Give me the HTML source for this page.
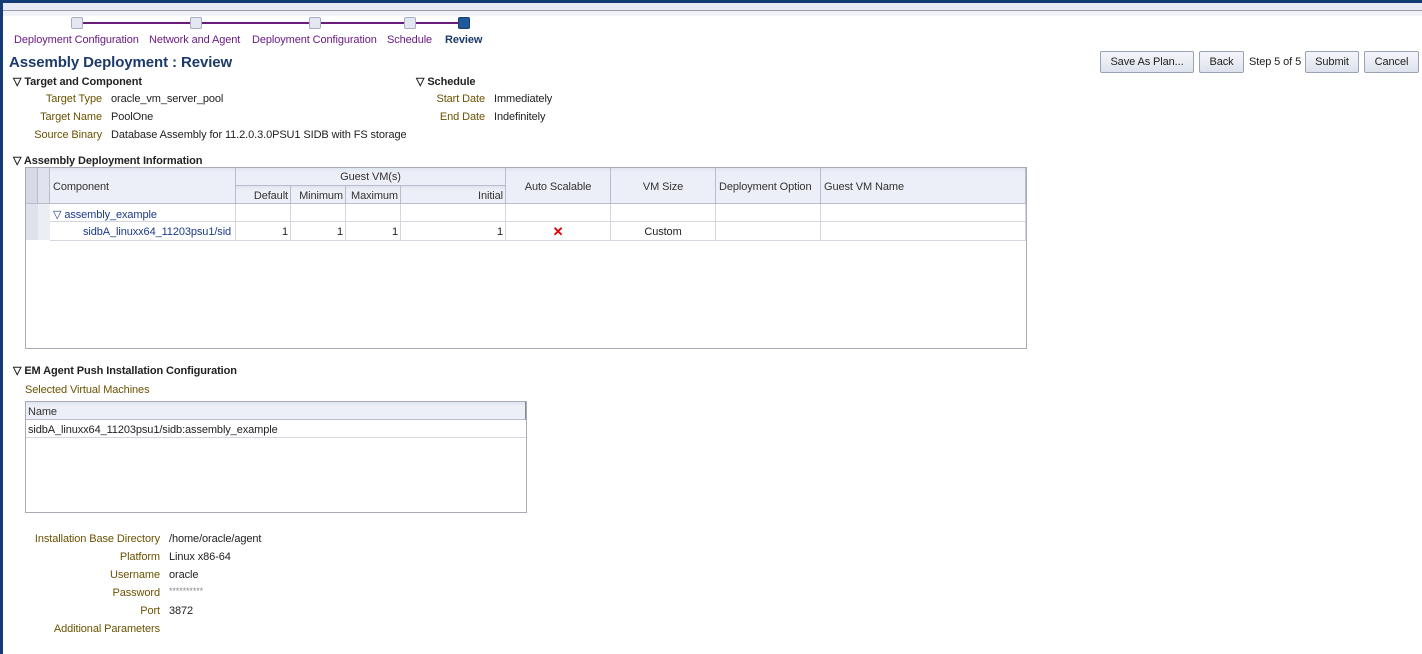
<!DOCTYPE html>
<html><head><meta charset="utf-8"><style>
*{margin:0;padding:0;box-sizing:border-box}
body{width:1422px;height:654px;background:#fff;position:relative;overflow:hidden;font-family:"Liberation Sans",sans-serif;font-size:11px;color:#222;letter-spacing:-0.1px}
.a{position:absolute;white-space:nowrap;margin-top:1px}
.f{margin-top:0}
.lbl{color:#6b5200;text-align:right}
.sq{position:absolute;top:17px;width:12px;height:12px;border:1px solid #a8aec4;background:#e4e7f0;border-radius:2px}
.st{color:#6b1c86;font-size:11px}
.h{font-weight:bold;font-size:11px;color:#222}
.btn{position:absolute;top:51px;height:22px;border:1px solid #9aa2b6;background:linear-gradient(#f4f6fa,#dde2ec);font-size:11px;color:#222;text-align:center;line-height:21px;border-radius:2px}
.c{position:absolute;border-right:1px solid #b8bccc;border-bottom:1px solid #b8bccc;padding-top:1px}
.hd{background:linear-gradient(#dfe4f0 0,#eceff7 4px,#eceff7);color:#333}
.r{border-right:1px solid #d4d7e0;border-bottom:1px solid #d4d7e0;position:absolute}
</style></head><body>
<div class="a f" style="left:0;top:0;width:1422px;height:3px;background:#143c74"></div>
<div class="a f" style="left:0;top:0;width:3px;height:654px;background:#143c74"></div>
<div class="a f" style="left:3px;top:3px;width:1419px;height:7px;background:#e8ebf4"></div>
<div class="a f" style="left:3px;top:10px;width:1419px;height:1px;background:#9a9ca6"></div>
<div class="a f" style="left:3px;top:11px;width:1419px;height:5px;background:#f1f3f9"></div>

<div class="a f" style="left:83px;top:22px;width:375px;height:2px;background:#6b1c7a"></div>
<div class="sq" style="left:71px"></div>
<div class="sq" style="left:190px"></div>
<div class="sq" style="left:309px"></div>
<div class="sq" style="left:404px"></div>
<div class="sq" style="left:458px;background:#1e5a9a;border-color:#154070"></div>
<div class="a st" style="left:14px;top:33px">Deployment Configuration</div>
<div class="a st" style="left:149px;top:33px">Network and Agent</div>
<div class="a st" style="left:252px;top:33px">Deployment Configuration</div>
<div class="a st" style="left:387px;top:33px">Schedule</div>
<div class="a" style="left:445px;top:33px;font-weight:bold;color:#1c3a6a">Review</div>

<div class="a" style="left:9px;top:53px;font-size:15px;font-weight:bold;color:#1c3a6a">Assembly Deployment : Review</div>
<div class="btn" style="left:1100px;width:94px">Save As Plan...</div>
<div class="btn" style="left:1199px;width:45px">Back</div>
<div class="a" style="left:1249px;top:55px">Step 5 of 5</div>
<div class="btn" style="left:1305px;width:54px">Submit</div>
<div class="btn" style="left:1364px;width:55px">Cancel</div>

<div class="a h" style="left:13px;top:74px">▽ Target and Component</div>
<div class="a lbl" style="left:20px;top:92px;width:82px">Target Type</div><div class="a" style="left:111px;top:92px">oracle_vm_server_pool</div>
<div class="a lbl" style="left:20px;top:110px;width:82px">Target Name</div><div class="a" style="left:111px;top:110px">PoolOne</div>
<div class="a lbl" style="left:20px;top:128px;width:82px">Source Binary</div><div class="a" style="left:111px;top:128px">Database Assembly for 11.2.0.3.0PSU1 SIDB with FS storage</div>
<div class="a h" style="left:416px;top:74px">▽ Schedule</div>
<div class="a lbl" style="left:420px;top:92px;width:65px">Start Date</div><div class="a" style="left:494px;top:92px">Immediately</div>
<div class="a lbl" style="left:420px;top:110px;width:65px">End Date</div><div class="a" style="left:494px;top:110px">Indefinitely</div>

<div class="a h" style="left:13px;top:153px">▽ Assembly Deployment Information</div>
<div class="a f" style="left:25px;top:167px;width:1002px;height:182px;border:1px solid #a8abb6"></div>
<div class="c hd" style="left:26px;top:168px;width:12px;height:36px;background:#d6dae6"></div>
<div class="c hd" style="left:38px;top:168px;width:12px;height:36px;background:#e0e3ee"></div>
<div class="c hd" style="left:50px;top:168px;width:186px;height:36px;padding:13px 0 0 3px">Component</div>
<div class="c hd" style="left:236px;top:168px;width:270px;height:18px;text-align:center;padding-top:3px">Guest VM(s)</div>
<div class="c hd" style="left:236px;top:186px;width:55px;height:18px;text-align:right;padding:4px 2px 0 0">Default</div>
<div class="c hd" style="left:291px;top:186px;width:55px;height:18px;text-align:right;padding:4px 2px 0 0">Minimum</div>
<div class="c hd" style="left:346px;top:186px;width:55px;height:18px;text-align:right;padding:4px 2px 0 0">Maximum</div>
<div class="c hd" style="left:401px;top:186px;width:105px;height:18px;text-align:right;padding:4px 2px 0 0">Initial</div>
<div class="c hd" style="left:506px;top:168px;width:105px;height:36px;text-align:center;padding-top:13px">Auto Scalable</div>
<div class="c hd" style="left:611px;top:168px;width:105px;height:36px;text-align:center;padding-top:13px">VM Size</div>
<div class="c hd" style="left:716px;top:168px;width:105px;height:36px;padding:13px 0 0 3px">Deployment Option</div>
<div class="c hd" style="left:821px;top:168px;width:205px;height:36px;padding:13px 0 0 3px">Guest VM Name</div>

<div class="a f" style="left:26px;top:204px;width:12px;height:36px;background:#dfe2ec"></div>
<div class="a f" style="left:38px;top:204px;width:12px;height:36px;background:#eceef5"></div>
<div class="r" style="left:50px;top:204px;width:186px;height:18px;padding:4px 0 0 3px;color:#1c3a8a">▽ assembly_example</div>
<div class="r" style="left:236px;top:204px;width:55px;height:18px"></div>
<div class="r" style="left:291px;top:204px;width:55px;height:18px"></div>
<div class="r" style="left:346px;top:204px;width:55px;height:18px"></div>
<div class="r" style="left:401px;top:204px;width:105px;height:18px"></div>
<div class="r" style="left:506px;top:204px;width:105px;height:18px"></div>
<div class="r" style="left:611px;top:204px;width:105px;height:18px"></div>
<div class="r" style="left:716px;top:204px;width:105px;height:18px"></div>
<div class="r" style="left:821px;top:204px;width:205px;height:18px"></div>
<div class="r" style="left:50px;top:222px;width:186px;height:19px;padding:4px 0 0 33px;color:#1c3a8a">sidbA_linuxx64_11203psu1/sid</div>
<div class="r" style="left:236px;top:222px;width:55px;height:19px;text-align:right;padding:4px 2px 0 0">1</div>
<div class="r" style="left:291px;top:222px;width:55px;height:19px;text-align:right;padding:4px 2px 0 0">1</div>
<div class="r" style="left:346px;top:222px;width:55px;height:19px;text-align:right;padding:4px 2px 0 0">1</div>
<div class="r" style="left:401px;top:222px;width:105px;height:19px;text-align:right;padding:4px 2px 0 0">1</div>
<div class="r" style="left:506px;top:222px;width:105px;height:19px;text-align:center;color:#e00000;font-weight:bold;font-size:13px;line-height:19px">✕</div>
<div class="r" style="left:611px;top:222px;width:105px;height:19px;text-align:center;padding-top:4px">Custom</div>
<div class="r" style="left:716px;top:222px;width:105px;height:19px"></div>
<div class="r" style="left:821px;top:222px;width:205px;height:19px"></div>

<div class="a h" style="left:13px;top:363px">▽ EM Agent Push Installation Configuration</div>
<div class="a" style="left:25px;top:383px;color:#6b5200">Selected Virtual Machines</div>
<div class="a f" style="left:25px;top:401px;width:502px;height:112px;border:1px solid #a8abb6"></div>
<div class="c hd" style="left:26px;top:402px;width:500px;height:18px;padding:4px 0 0 2px;border-right:1px solid #888">Name</div>
<div class="r" style="left:26px;top:420px;width:500px;height:18px;padding:4px 0 0 2px;border-right:none">sidbA_linuxx64_11203psu1/sidb:assembly_example</div>

<div class="a lbl" style="left:20px;top:532px;width:140px">Installation Base Directory</div><div class="a" style="left:169px;top:532px">/home/oracle/agent</div>
<div class="a lbl" style="left:20px;top:550px;width:140px">Platform</div><div class="a" style="left:169px;top:550px">Linux x86-64</div>
<div class="a lbl" style="left:20px;top:568px;width:140px">Username</div><div class="a" style="left:169px;top:568px">oracle</div>
<div class="a lbl" style="left:20px;top:586px;width:140px">Password</div><div class="a" style="left:169px;top:585px;color:#888;font-size:9px">**********</div>
<div class="a lbl" style="left:20px;top:604px;width:140px">Port</div><div class="a" style="left:169px;top:604px">3872</div>
<div class="a lbl" style="left:20px;top:622px;width:140px">Additional Parameters</div>
</body></html>
